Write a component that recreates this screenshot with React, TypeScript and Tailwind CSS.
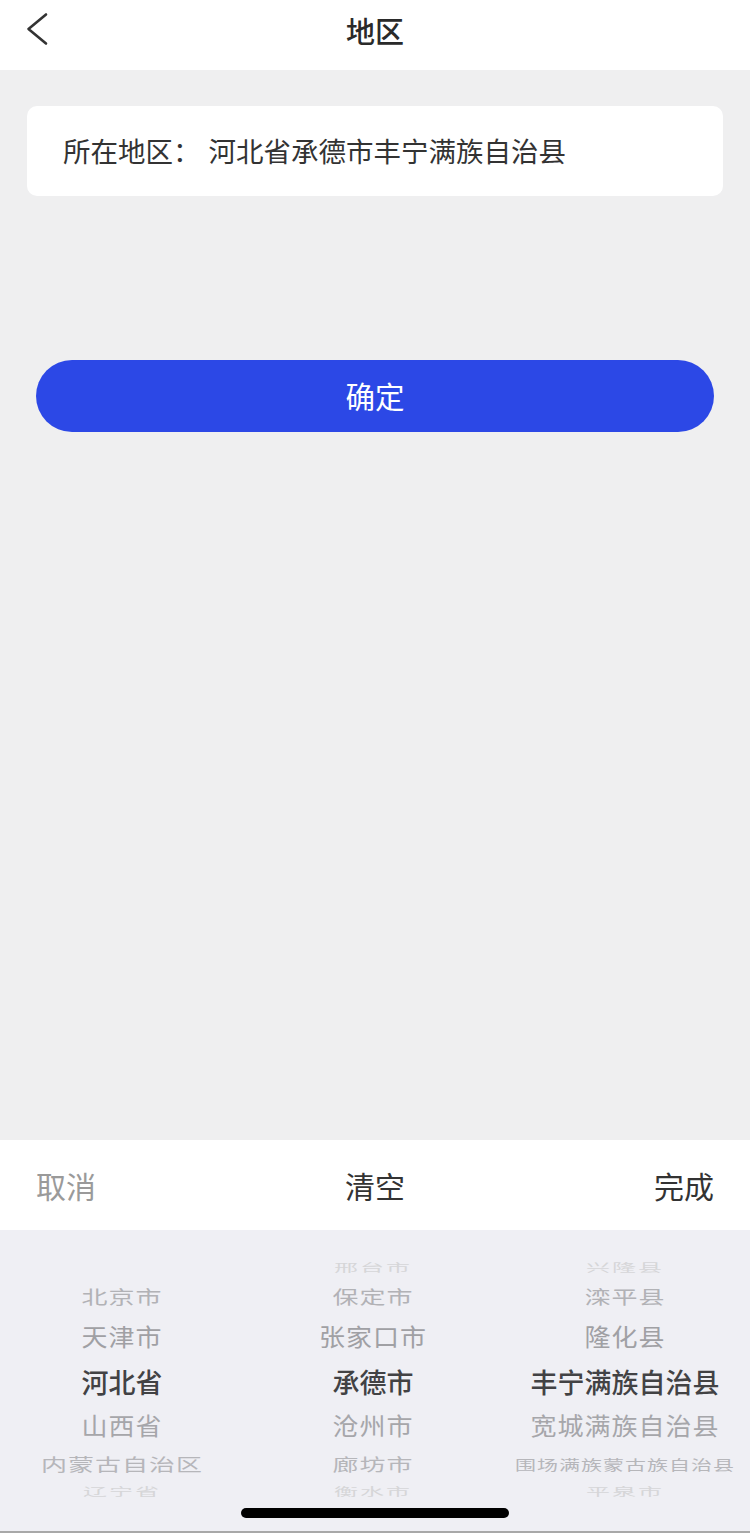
import React from "react";

type Row = { h: string; size: string; color: string; scale: string; extra?: string };

// wheel rows, top to bottom; middle one is the selected row
const rows: Row[] = [
  { h: "h-[28px]", size: "text-[24px]", color: "text-[#d6d6d8]", scale: "scale-y-[0.45]", extra: "tracking-[2px]" },
  { h: "h-[28px]", size: "text-[26px]", color: "text-[#b2b2b6]", scale: "scale-y-[0.72]", extra: "tracking-[1px]" },
  { h: "h-[52px]", size: "text-[26px]", color: "text-[#a0a0a4]", scale: "scale-y-[0.93]", extra: "tracking-[1px]" },
  { h: "h-[38px]", size: "text-[27px]", color: "text-[#424244]", scale: "scale-y-100", extra: "font-medium" },
  { h: "h-[50px]", size: "text-[26px]", color: "text-[#a6a6aa]", scale: "scale-y-[0.93]", extra: "tracking-[1px]" },
  { h: "h-[28px]", size: "text-[26px]", color: "text-[#b6b6ba]", scale: "scale-y-[0.66]", extra: "tracking-[1px]" },
  { h: "h-[28px]", size: "text-[24px]", color: "text-[#d6d6d8]", scale: "scale-y-[0.45]", extra: "tracking-[2px]" },
];

const columns: string[][] = [
  ["", "北京市", "天津市", "河北省", "山西省", "内蒙古自治区", "辽宁省"],
  ["邢台市", "保定市", "张家口市", "承德市", "沧州市", "廊坊市", "衡水市"],
  ["兴隆县", "滦平县", "隆化县", "丰宁满族自治县", "宽城满族自治县", "围场满族蒙古族自治县", "平泉市"],
];

const Wheel: React.FC<{ items: string[]; shift?: string }> = ({ items, shift }) => (
  <div className={`flex flex-col items-center ${shift ?? ""}`}>
    {items.map((label, i) => {
      const r = rows[i];
      const long = label.length > 8;
      return (
        <div key={i} className={`${r.h} w-full flex items-center justify-center`}>
          <span
            className={`whitespace-nowrap leading-none ${long ? "text-[21px]" : r.size} ${r.color} ${r.scale} ${r.extra ?? ""}`}
          >
            {label}
          </span>
        </div>
      );
    })}
  </div>
);

const App: React.FC = () => {
  return (
    <div
      className="w-[750px] h-[1533px] flex flex-col bg-[#efeff0] relative overflow-hidden"
      style={{ fontFamily: '"Noto Sans CJK SC", "Noto Sans", sans-serif' }}
    >
      {/* HEADER */}
      <div className="h-[70px] bg-white flex items-center relative pb-[10px]">
        <svg className="absolute left-[24px] top-[12px]" width="28" height="34" viewBox="0 0 28 34">
          <path d="M22 2.5 L4.5 17 L22 31.5" fill="none" stroke="#333" strokeWidth="2.6" strokeLinecap="round" strokeLinejoin="round" />
        </svg>
        <h1 className="flex-1 text-center text-[29px] font-medium text-[#2a2a2a] leading-none">地区</h1>
      </div>

      {/* CONTENT */}
      <div className="flex-1 flex flex-col px-[27px] pt-[36px]">
        <div className="h-[90px] bg-white rounded-[10px] flex items-center pl-[36px] text-[27.5px] text-[#333]">
          <span>所在地区：</span>
          <span className="ml-[8px]">河北省承德市丰宁满族自治县</span>
        </div>

        <button className="mt-[164px] mx-[9px] h-[72px] rounded-full bg-[#2c48e6] text-white text-[29.5px] flex items-center justify-center pb-[2px]">
          确定
        </button>
      </div>

      {/* PICKER TOOLBAR */}
      <div className="h-[90px] bg-white flex items-center justify-between px-[36px] text-[30px]">
        <span className="text-[#9a9a9a]">取消</span>
        <span className="text-[#333]">清空</span>
        <span className="text-[#333]">完成</span>
      </div>

      {/* PICKER WHEELS */}
      <div className="h-[303px] bg-[#efeff4] pt-[24px] border-b-2 border-[#a8a8a8]">
        <div className="grid grid-cols-3">
          <Wheel items={columns[0]} shift="-translate-x-[3px]" />
          <Wheel items={columns[1]} shift="-translate-x-[2px]" />
          <Wheel items={columns[2]} />
        </div>
      </div>

      {/* HOME INDICATOR */}
      <div className="absolute left-[241px] bottom-[15px] w-[268px] h-[10px] rounded-full bg-black" />
    </div>
  );
};

export default App;
